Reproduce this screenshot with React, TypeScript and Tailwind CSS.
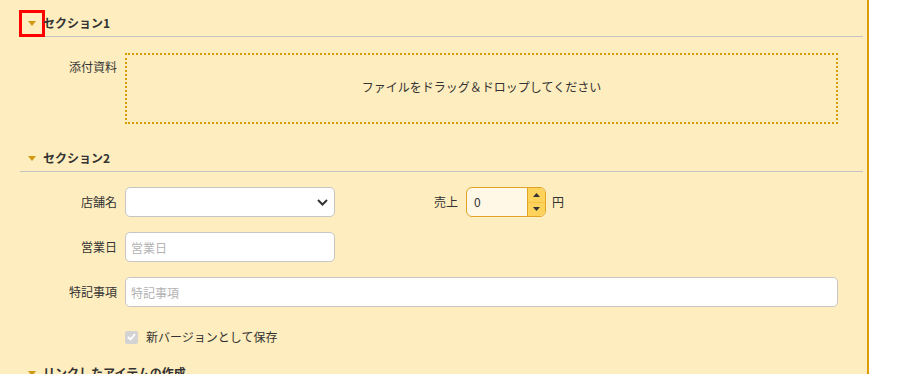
const font = { fontFamily: '"Noto Sans CJK JP", "Noto Sans", sans-serif' };

const Caret = () => (
  <svg width="8" height="5" viewBox="0 0 8 5">
    <path d="M0 0h8L4 5z" fill="#d19a12" />
  </svg>
);

const SectionHeader = ({ title, focused }: { title: string; focused?: boolean }) => (
  <div className="flex items-center h-[22px] border-b border-[#c3c3c3] box-content pb-[2px] text-[12px] font-bold text-[#333]">
    <button
      className={`flex items-center justify-center w-[20px] h-[21px] ml-[2px] ${
        focused ? "outline-[3px] outline-solid outline-[#ff0000]" : ""
      }`}
    >
      <Caret />
    </button>
    <span className="ml-[1px]">{title}</span>
  </div>
);

const Label = ({ text, className = "" }: { text: string; className?: string }) => (
  <div className={`w-[97px] shrink-0 text-right text-[12px] text-[#333] ${className}`}>{text}</div>
);

export default function App() {
  return (
    <div className="flex w-full min-h-[374px] bg-white overflow-hidden" style={font}>
      <div className="w-[869px] shrink-0 bg-[#feedbe] border-r-2 border-[#dc9c00] pl-[20px] pr-[4px] pt-[12px] min-h-[374px]">
        <SectionHeader title="セクション1" focused />

        <div className="flex gap-[8px] mt-[16px] pr-[25px]">
          <Label text="添付資料" className="pt-[5px]" />
          <div className="flex-1 h-[71px] border-2 border-dotted border-[#d89c0a] flex items-center justify-center pb-[3px] text-[12px] text-[#333]">
            ファイルをドラッグ＆ドロップしてください
          </div>
        </div>

        <div className="mt-[23px]">
          <SectionHeader title="セクション2" />
        </div>

        <div className="flex flex-col gap-[15px] mt-[15px] pr-[25px]">
          <div className="flex items-center h-[30px]">
            <div className="flex items-center gap-[8px] w-[341px]">
              <Label text="店舗名" />
              <div className="relative w-[210px] h-[30px]">
                <select className="appearance-none w-full h-full bg-white border border-[#c6c6c6] rounded-[5px] text-[12px] px-[6px] outline-none" />
                <svg
                  className="absolute right-[7px] top-[12px] pointer-events-none"
                  width="11"
                  height="7"
                  viewBox="0 0 11 7"
                >
                  <path d="M1 1l4.5 4.5L10 1" stroke="#333" strokeWidth="2" fill="none" />
                </svg>
              </div>
            </div>
            <div className="flex items-center gap-[8px]">
              <Label text="売上" />
              <div className="flex w-[80px] h-[30px] border border-[#e0a325] rounded-[6px] bg-[#fff8e6] overflow-hidden">
                <input
                  readOnly
                  value="0"
                  className="w-0 flex-1 bg-transparent pl-[7px] text-[12px] text-[#333] outline-none"
                />
                <div className="w-[18px] flex flex-col border-l border-[#e0a325] bg-[#fdd35c]">
                  <div className="flex-1 flex items-center justify-center border-b border-[#f6c243]">
                    <svg width="7" height="4" viewBox="0 0 7 4">
                      <path d="M0 4h7L3.5 0z" fill="#333" />
                    </svg>
                  </div>
                  <div className="flex-1 flex items-center justify-center">
                    <svg width="7" height="4" viewBox="0 0 7 4">
                      <path d="M0 0h7L3.5 4z" fill="#333" />
                    </svg>
                  </div>
                </div>
              </div>
              <span className="text-[12px] text-[#333] -ml-[2px]">円</span>
            </div>
          </div>

          <div className="flex items-center gap-[8px] h-[30px]">
            <Label text="営業日" />
            <input
              placeholder="営業日"
              className="w-[210px] h-[30px] bg-white border border-[#c6c6c6] rounded-[5px] px-[5px] text-[12px] placeholder:text-[#b3b3b3] outline-none"
            />
          </div>

          <div className="flex items-center gap-[8px] h-[30px]">
            <Label text="特記事項" />
            <input
              placeholder="特記事項"
              className="flex-1 h-[30px] bg-white border border-[#c6c6c6] rounded-[5px] px-[5px] text-[12px] placeholder:text-[#b3b3b3] outline-none"
            />
          </div>

          <div className="flex items-center gap-[8px] h-[30px]">
            <div className="w-[97px] shrink-0" />
            <span className="w-[13px] h-[13px] rounded-[2px] bg-[#d3d3d3] flex items-center justify-center">
              <svg width="9" height="8" viewBox="0 0 9 8">
                <path d="M1 4l2.5 2.5L8 1" stroke="#fff" strokeWidth="1.8" fill="none" />
              </svg>
            </span>
            <span className="text-[12px] text-[#333]">新バージョンとして保存</span>
          </div>
        </div>

        <div className="mt-[10px]">
          <SectionHeader title="リンクしたアイテムの作成" />
        </div>
      </div>
      <div className="flex-1 bg-white" />
    </div>
  );
}
